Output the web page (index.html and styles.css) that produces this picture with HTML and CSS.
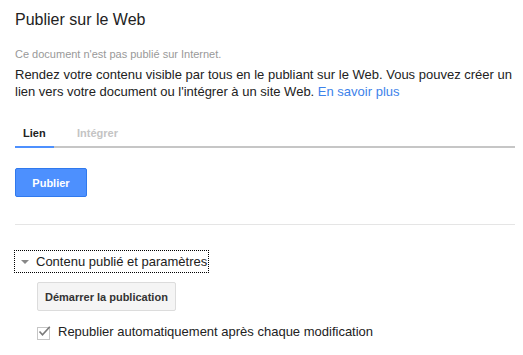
FILE: index.html
```html
<!DOCTYPE html>
<html lang="fr">
<head>
  <meta charset="UTF-8" />
  <title>Publier sur le Web</title>
  <link rel="stylesheet" href="styles.css">
</head>
<body>
  <div class="dialog">
    <h1 class="title">Publier sur le Web</h1>

    <div class="status">Ce document n'est pas publié sur Internet.</div>
    <p class="intro">
      Rendez votre contenu visible par tous en le publiant sur le Web. Vous pouvez créer un
      lien vers votre document ou l'intégrer à un site Web. <a href="#" class="link">En savoir plus</a>
    </p>

    <div class="tabs">
      <div class="tab active">Lien</div>
      <div class="tab">Intégrer</div>
    </div>

    <button class="btn-primary">Publier</button>

    <div class="divider"></div>

    <div class="section-toggle">
      <span class="arrow"></span>
      Contenu publié et paramètres
    </div>

    <div class="section-body">
      <button class="btn-default">Démarrer la publication</button>

      <label class="check-row">
        <span class="checkbox">
          <svg width="13" height="11" viewBox="0 0 13 11">
            <path d="M1.5 5.5 L4.5 8.8 L11.8 0.8" fill="none" stroke="#7a7a7a" stroke-width="1.6" />
          </svg>
        </span>
        Republier automatiquement après chaque modification
      </label>
    </div>
  </div>
</body>
</html>
```

FILE: styles.css
```css
body {
  margin: 0;
  background: #fff;
  font-family: "Liberation Sans", Arial, sans-serif;
  color: #222;
}
.dialog {
  padding: 10px 8px 0 15px;
}
.title {
  margin: 0;
  font-size: 16px;
  font-weight: normal;
  color: #222;
  line-height: 20px;
}
.status {
  margin-top: 17px;
  font-size: 11px;
  color: #999;
  line-height: 14px;
}
.intro {
  margin: 5px 0 0;
  font-size: 13px;
  line-height: 17px;
  color: #222;
}
.link {
  color: #3d82ea;
  text-decoration: none;
}
.tabs {
  display: flex;
  margin-top: 22px;
  border-bottom: 2px solid #c6c6c6;
}
.tab {
  padding: 4px 8px 6px;
  width: 23px;
  font-size: 11px;
  font-weight: bold;
  color: #c4c4c4;
  line-height: 14px;
  margin-bottom: -2px;
  border-bottom: 2px solid transparent;
}
.tab + .tab {
  margin-left: 15px;
  width: auto;
  padding-left: 8px;
}
.tab.active {
  color: #222;
  border-bottom-color: #4d90fe;
}
.btn-primary {
  margin-top: 20px;
  display: block;
  height: 29px;
  width: 72px;
  padding: 0;
  background: #4d90fe;
  border: 1px solid #3079ed;
  border-radius: 2px;
  color: #fff;
  font-family: inherit;
  font-size: 11px;
  font-weight: bold;
}
.divider {
  margin-top: 27px;
  height: 1px;
  background: #e5e5e5;
}
.section-toggle {
  display: inline-flex;
  align-items: center;
  margin-top: 25px;
  margin-left: -1px;
  padding: 3px 1px 3px 6px;
  border: 1px dotted #000;
  font-size: 13px;
  line-height: 15px;
  color: #222;
}
.arrow {
  width: 0;
  height: 0;
  border-left: 4px solid transparent;
  border-right: 4px solid transparent;
  border-top: 4px solid #888;
  margin-right: 7px;
}
.section-body {
  padding-left: 22px;
}
.btn-default {
  display: block;
  margin-top: 9px;
  height: 29px;
  padding: 0 7px;
  background: #f5f5f5;
  border: 1px solid #dcdcdc;
  border-radius: 2px;
  color: #333;
  font-family: inherit;
  font-size: 11px;
  font-weight: bold;
}
.check-row {
  display: flex;
  align-items: center;
  margin-top: 13px;
  font-size: 13px;
  line-height: 16px;
  color: #222;
}
.checkbox {
  position: relative;
  width: 11px;
  height: 11px;
  border: 1px solid #c6c6c6;
  margin-right: 8px;
  margin-top: 2px;
}
.checkbox svg {
  position: absolute;
  left: 0;
  top: -2px;
}
```
